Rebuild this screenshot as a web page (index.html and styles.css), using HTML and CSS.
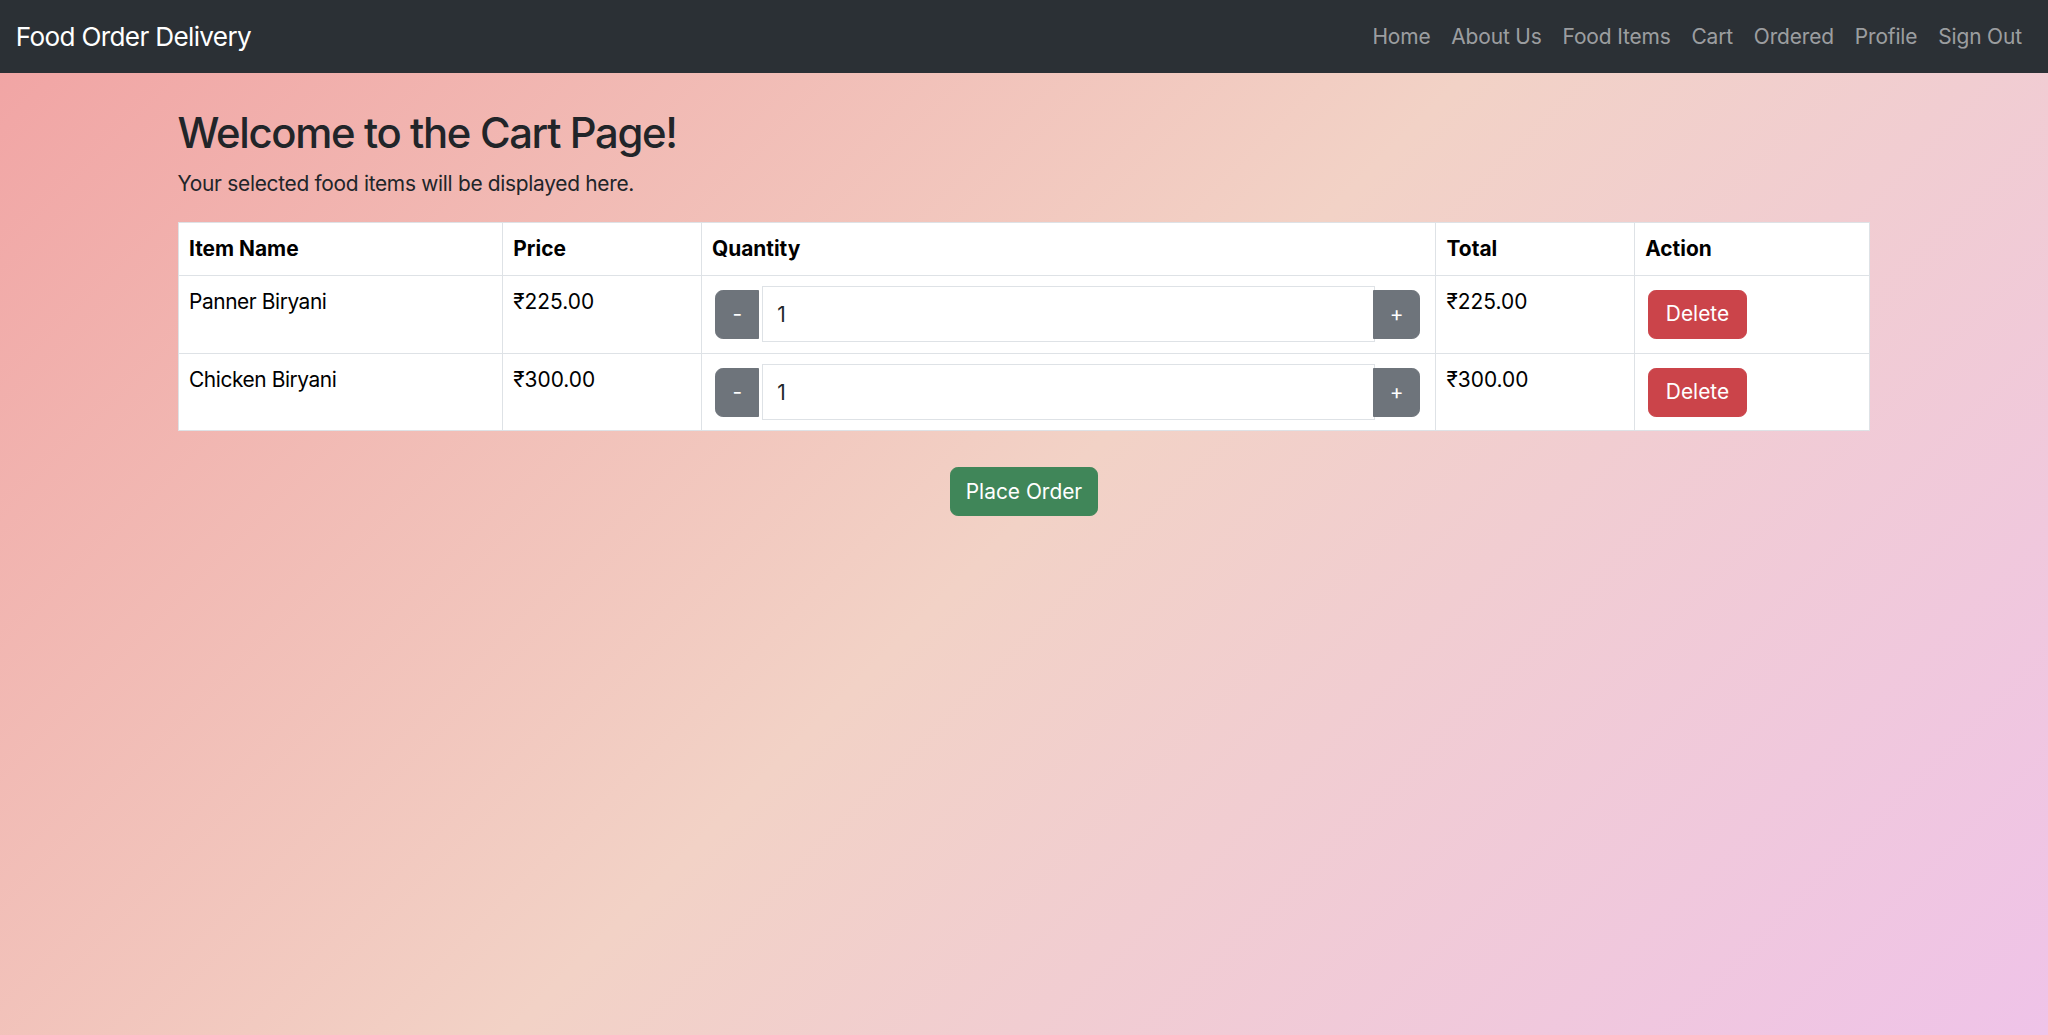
FILE: index.html
```html
<!DOCTYPE html>
<html lang="en">
<head>
<meta charset="utf-8">
<title>Cart - Food Order Delivery</title>
<link rel="stylesheet" href="styles.css">
</head>
<body>
<nav class="navbar">
  <div class="navbar-inner">
    <a class="brand" href="#">Food Order Delivery</a>
    <ul class="nav">
      <li><a class="nav-link" href="#">Home</a></li>
      <li><a class="nav-link" href="#">About Us</a></li>
      <li><a class="nav-link" href="#">Food Items</a></li>
      <li><a class="nav-link" href="#">Cart</a></li>
      <li><a class="nav-link" href="#">Ordered</a></li>
      <li><a class="nav-link" href="#">Profile</a></li>
      <li><a class="nav-link" href="#">Sign Out</a></li>
    </ul>
  </div>
</nav>

<main class="container">
  <h2 class="title">Welcome to the Cart Page!</h2>
  <p class="lead-text">Your selected food items will be displayed here.</p>

  <table class="cart-table">
    <colgroup>
      <col class="col-name">
      <col class="col-price">
      <col class="col-qty">
      <col class="col-total">
      <col class="col-action">
    </colgroup>
    <thead>
      <tr>
        <th>Item Name</th>
        <th>Price</th>
        <th>Quantity</th>
        <th>Total</th>
        <th>Action</th>
      </tr>
    </thead>
    <tbody>
      <tr>
        <td class="name-cell">Panner Biryani</td>
        <td>₹225.00</td>
        <td>
          <div class="qty-group">
            <button class="btn btn-gray btn-minus" type="button">-</button>
            <input class="qty-input" type="text" value="1">
            <button class="btn btn-gray btn-plus" type="button">+</button>
          </div>
        </td>
        <td>₹225.00</td>
        <td class="action-cell"><button class="btn btn-red" type="button">Delete</button></td>
      </tr>
      <tr>
        <td class="name-cell">Chicken Biryani</td>
        <td>₹300.00</td>
        <td>
          <div class="qty-group">
            <button class="btn btn-gray btn-minus" type="button">-</button>
            <input class="qty-input" type="text" value="1">
            <button class="btn btn-gray btn-plus" type="button">+</button>
          </div>
        </td>
        <td>₹300.00</td>
        <td class="action-cell"><button class="btn btn-red" type="button">Delete</button></td>
      </tr>
    </tbody>
  </table>

  <div class="order-row">
    <button class="btn btn-green" type="button">Place Order</button>
  </div>
</main>
</body>
</html>
```

FILE: styles.css
```css
html {
  font-size: 20.9px;
  height: 100%;
}

* {
  box-sizing: border-box;
}

body {
  margin: 0;
  min-height: 100%;
  font-family: Inter, "Noto Sans", "DejaVu Sans", sans-serif;
  font-size: 1rem;
  line-height: 1.5;
  color: #212529;
  background: linear-gradient(135deg, #f1a3a3 0%, #f2d2c6 50%, #efc3e8 100%);
}

.navbar {
  background: #2b3035;
  padding: 0.5rem 0;
}

.navbar-inner {
  display: flex;
  align-items: center;
  justify-content: space-between;
  padding: 0 0.75rem;
}

.brand {
  color: #fff;
  text-decoration: none;
  font-size: 1.25rem;
  line-height: 1.5;
  letter-spacing: -0.025em;
  padding: 0.3125rem 0;
  margin-right: 1rem;
}

.nav {
  display: flex;
  list-style: none;
  margin: 0;
  padding: 0;
}

.nav-link {
  display: block;
  padding: 0.5rem;
  color: rgba(255, 255, 255, 0.55);
  text-decoration: none;
  letter-spacing: -0.006em;
}

.container {
  max-width: 82.5rem;
  margin: 1.65rem auto 0;
  padding: 0 0.75rem;
}

.title {
  font-size: 2rem;
  font-weight: 500;
  line-height: 1.2;
  letter-spacing: -0.032em;
  margin: 0 0 0.5rem;
  color: #212529;
}

.lead-text {
  margin: 0 0 1.05rem;
  letter-spacing: -0.014em;
}

.cart-table {
  width: 100%;
  border-collapse: collapse;
  table-layout: fixed;
  background: #fff;
  color: #000;
  vertical-align: top;
}

.col-name { width: 19.17%; }
.col-price { width: 11.74%; }
.col-qty { width: 43.42%; }
.col-total { width: 11.74%; }
.col-action { width: 13.93%; }

.cart-table th,
.cart-table td {
  border: 1px solid #dee2e6;
  padding: 0.5rem;
  text-align: left;
  vertical-align: top;
}

.cart-table th {
  font-weight: 700;
}

.cart-table .name-cell {
  letter-spacing: -0.02em;
}

.cart-table .action-cell {
  vertical-align: middle;
}

.qty-group {
  display: flex;
  align-items: center;
  margin: 0 0.21rem 0 0.16rem;
}

.btn {
  font-family: inherit;
  font-size: 1rem;
  line-height: 1.5;
  padding: 0.375rem 0.75rem;
  border: 1px solid transparent;
  border-radius: 0.375rem;
  color: #fff;
  cursor: pointer;
}

.btn-gray {
  background: #6e747b;
  border-color: #6e747b;
}

.btn-minus {
  border-radius: 0.375rem 0 0 0.375rem;
  padding: 0.375rem 0.78rem;
}

.btn-plus {
  border-radius: 0 0.375rem 0.375rem 0;
}

.qty-input {
  flex: 1;
  min-width: 0;
  height: 2.68rem;
  margin: 0 -0.08rem 0 0.1rem;
  padding: 0.375rem 0.7rem;
  border: 1px solid #dee2e6;
  font-family: inherit;
  font-size: 1rem;
  color: #212529;
  background: #fff;
}

.btn-red {
  background: #cb444a;
  border-color: #cb444a;
  margin-left: 0.14rem;
  padding: 0.375rem 0.8rem;
}

.order-row {
  margin-top: 1.72rem;
  text-align: center;
}

.btn-green {
  background: #408659;
  border-color: #408659;
  padding: 0.375rem 0.72rem;
}
```
